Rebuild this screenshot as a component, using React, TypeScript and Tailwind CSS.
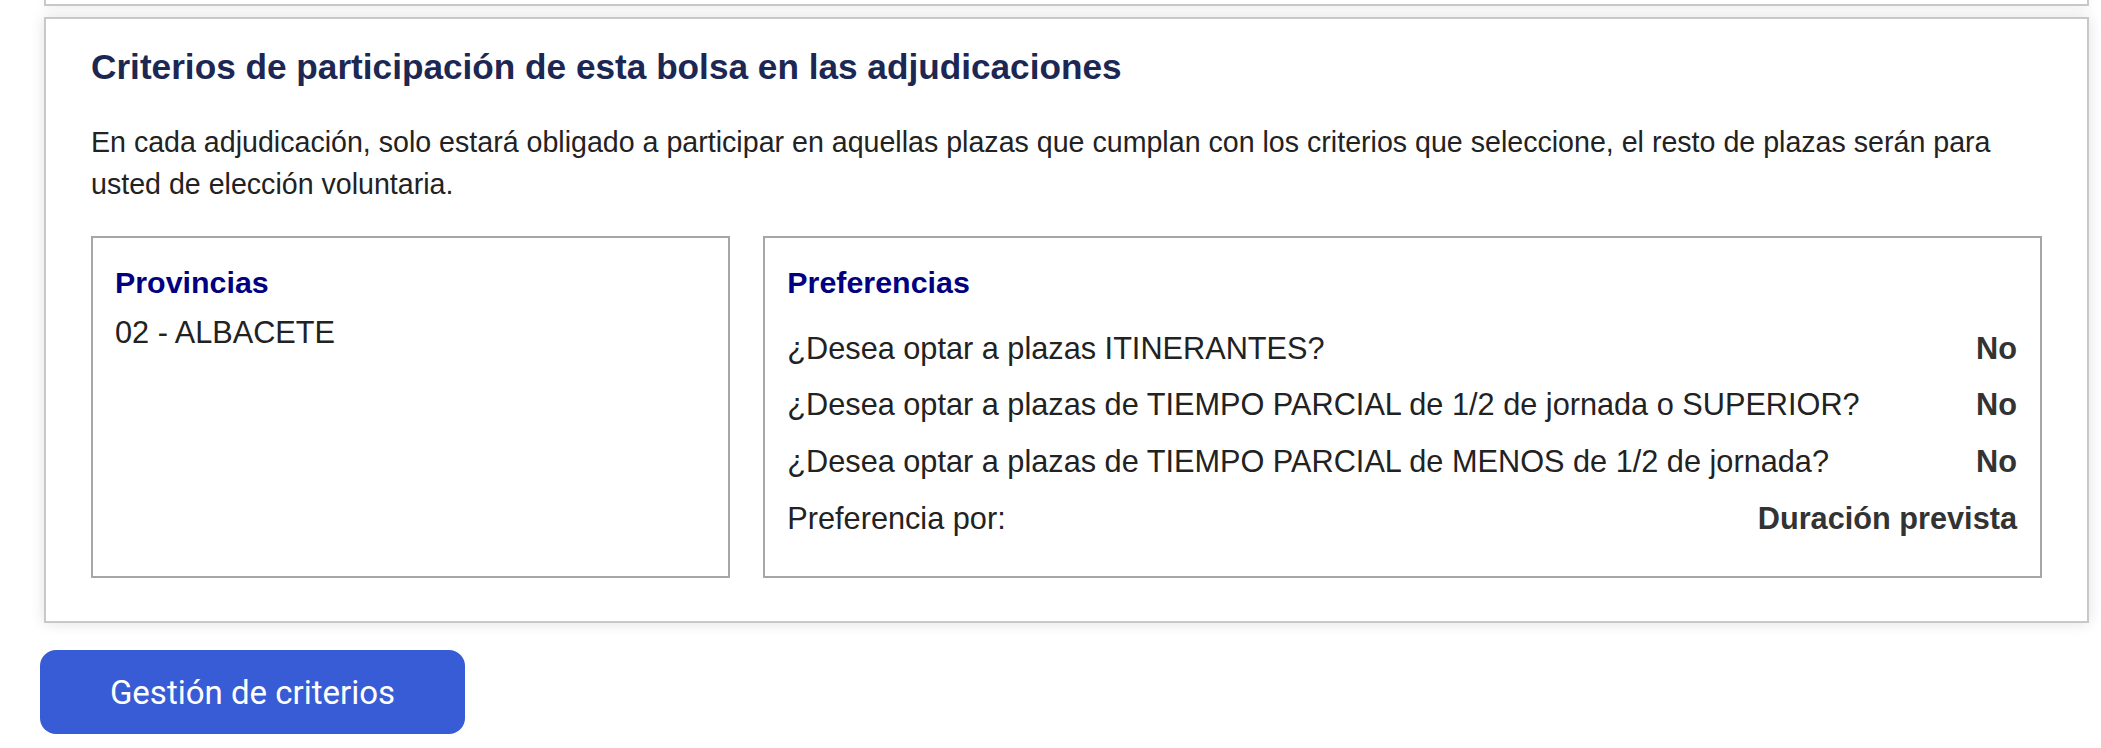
const preferencias = [
  { label: '¿Desea optar a plazas ITINERANTES?', value: 'No' },
  { label: '¿Desea optar a plazas de TIEMPO PARCIAL de 1/2 de jornada o SUPERIOR?', value: 'No' },
  { label: '¿Desea optar a plazas de TIEMPO PARCIAL de MENOS de 1/2 de jornada?', value: 'No' },
  { label: 'Preferencia por:', value: 'Duración prevista' },
];

function App() {
  return (
    <div className="min-h-screen bg-white font-['Liberation_Sans',Arial,sans-serif] text-[#222]">
      <div className="pl-[44px] pr-[12px]">
        {/* bottom edge of the previous card */}
        <div className="h-[6px] border-x-2 border-b-2 border-[#c8c8c8] bg-white shadow-[0_0_12px_rgba(0,0,0,0.1)]" />

        {/* Criterios card */}
        <section className="mt-[11px] border-2 border-[#c8c8c8] bg-white px-[45px] pt-[28px] pb-[43px] shadow-[0_0_14px_rgba(0,0,0,0.12)]">
          <h2 className="text-[35.2px] leading-[40px] font-bold text-[#1c2753]">
            Criterios de participación de esta bolsa en las adjudicaciones
          </h2>
          <p className="mt-[34px] text-[28.6px] leading-[42px]">
            En cada adjudicación, solo estará obligado a participar en aquellas plazas que cumplan con los criterios que seleccione, el resto de plazas serán para usted de elección voluntaria.
          </p>

          <div className="mt-[31px] grid grid-cols-[1fr_2fr] gap-[33px]">
            <div className="border-2 border-[#a6a6a6] pl-[22px] pr-[23px] pt-[26px] pb-[29px]">
              <h3 className="text-[30.4px] leading-[36px] font-bold text-[#000080]">Provincias</h3>
              <div className="mt-[15px] text-[30.7px] leading-[36px]">02 - ALBACETE</div>
            </div>

            <div className="border-2 border-[#a6a6a6] pl-[22px] pr-[23px] pt-[26px] pb-[29px]">
              <h3 className="text-[30.4px] leading-[36px] font-bold text-[#000080]">Preferencias</h3>
              <div className="mt-[20.6px] flex flex-col">
                {preferencias.map((p) => (
                  <div key={p.label} className="flex items-center justify-between text-[30.7px] leading-[56.7px]">
                    <span>{p.label}</span>
                    <span className="font-bold text-[#333]">{p.value}</span>
                  </div>
                ))}
              </div>
            </div>
          </div>
        </section>
      </div>

      <div className="pl-[40px] pt-[27px]">
        <button className="h-[84px] w-[425px] rounded-[16px] bg-[#385cd5] font-['Roboto',sans-serif] text-[33px] text-white">
          Gestión de criterios
        </button>
      </div>
    </div>
  );
}

export default App;
